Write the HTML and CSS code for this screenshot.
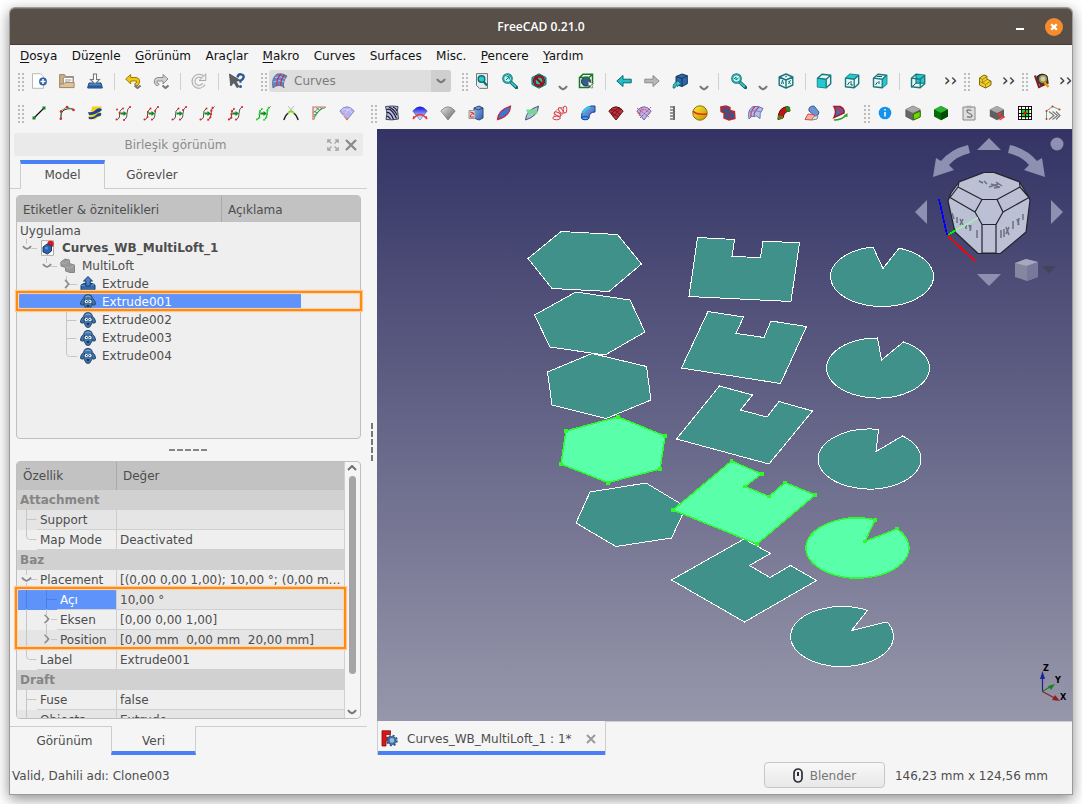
FILE: index.html
```html
<!DOCTYPE html>
<html lang="tr">
<head>
<meta charset="utf-8">
<title>FreeCAD 0.21.0</title>
<link rel="stylesheet" href="styles.css">
</head>
<body>
<svg class="defs" width="0" height="0">
  <defs>
    <linearGradient id="sky" x1="0" y1="0" x2="0" y2="1"><stop offset="0" stop-color="#333365"/><stop offset="1" stop-color="#9797ab"/></linearGradient>
    <linearGradient id="blueV" x1="0" y1="0" x2="1" y2="1"><stop offset="0" stop-color="#8fb4e8"/><stop offset="1" stop-color="#2f5fae"/></linearGradient>
    <linearGradient id="fanBlue" x1="0" y1="0" x2="0" y2="1"><stop offset="0" stop-color="#0a10e8"/><stop offset="1" stop-color="#ffffff"/></linearGradient>
    <linearGradient id="fanGray" x1="0" y1="0" x2="1" y2="1"><stop offset="0" stop-color="#e6e6e6"/><stop offset="1" stop-color="#606060"/></linearGradient>
    <linearGradient id="goldG" x1="0" y1="0" x2="1" y2="1"><stop offset="0" stop-color="#fff23a"/><stop offset="1" stop-color="#c08a00"/></linearGradient>
    <symbol id="chev" viewBox="0 0 10 6"><path d="M1 1q1 2 4 3.400Q8 3 9 1" fill="none" stroke="#7a7a7a" stroke-width="2"/></symbol>
    <symbol id="twist-open" viewBox="0 0 10 6"><path d="M1 1q1 1.800 4 3Q8 2.800 9 1" fill="none" stroke="#8c8c8c" stroke-width="1.800"/></symbol>
    <symbol id="twist" viewBox="0 0 6 10"><path d="M1 1q1 .5 3.600 4Q2 8.500 1 9" fill="none" stroke="#8c8c8c" stroke-width="1.800"/></symbol>
    <symbol id="pair" viewBox="0 0 16 16"><path d="M1 14.500Q5 14.500 4.500 10T7.500 3.500M8.500 15Q12 14 12 8.500T15.500 1.500" fill="none" stroke="#555" stroke-width="1"/><path d="M5.500 7.500h3V6l3.500 2.500-3.500 2.500V9.500h-3z" fill="#128a22"/></symbol>
    <symbol id="cube" viewBox="0 0 16 16"><path d="M1.500 5.200L6 1.200l8.700 1v8.600l-4.500 4L1.500 13.800z" fill="#e8f6f6" stroke="#1b777b" stroke-width="1.400" stroke-linejoin="round"/></symbol>
    <symbol id="cubewire" viewBox="0 0 16 16"><path d="M1.500 5.200l8.700 1 4.500-4M10.200 6.200v8.600" fill="none" stroke="#1b777b" stroke-width="1.300"/></symbol>
    <symbol id="dog" viewBox="0 0 16 16"><path d="M4.800 1.500Q8-.8 11.200 1.500l1.500 3Q15 6 15.700 10.200q-1.700 1.800-3.500.3-.5 1.500-1.300 2.500-.6 2.500-2.900 2.500T5.100 13q-.8-1-1.300-2.500-1.800 1.500-3.500-.3Q1 6 3.300 4.500z" fill="#3f74ad" stroke="#21405f" stroke-width=".9"/><path d="M4.500 5l-.7 5.500M11.500 5l.7 5.500" stroke="#1f3c5b" stroke-width=".8"/><path d="M5.500 3Q8 .8 10.500 3" stroke="#8fb6dc" fill="none"/><circle cx="6.300" cy="7.500" r="1.600" fill="#fff"/><circle cx="10" cy="7.500" r="1.600" fill="#fff"/><circle cx="6.600" cy="7.600" r=".6"/><circle cx="9.800" cy="7.600" r=".6"/><path d="M6.300 11.500q1.700-1 3.400 0l-1.700 2z" fill="#16283e"/></symbol>
    <symbol id="mag" viewBox="0 0 16 16"><path d="M7.500 8l7 6.500" stroke="#0d5d62" stroke-width="3.400" stroke-linecap="round"/><path d="M8 8.500l6 5.500" stroke="#2ec5c9" stroke-width="1.800"/><circle cx="5.500" cy="5.500" r="4.300" fill="#c9f2f2" stroke="#0d6d72" stroke-width="2"/><circle cx="5.500" cy="5.500" r="4.300" fill="none" stroke="#2ec5c9" stroke-width=".8"/></symbol>
    <symbol id="fan" viewBox="0 0 16 16"><path d="M.8 6Q8-2.500 15.200 6L8 15z"/></symbol>
  </defs>
</svg>

<main class="window">
  <header class="titlebar"><span class="title">FreeCAD 0.21.0</span><span class="minimize"></span>
    <span class="close"><svg width="18" height="18" viewBox="0 0 18 18"><circle cx="9" cy="9" r="9" fill="#f58b2d"/><path d="M6.200 6.200l5.600 5.600M11.800 6.200l-5.600 5.600" stroke="#fff" stroke-width="2.300"/></svg></span></header>

  <nav class="menubar">
    <span><u>D</u>osya</span><span>Düz<u>e</u>nle</span><span><u>G</u>örünüm</span><span>Araçlar</span><span><u>M</u>akro</span><span>Curves</span><span>Surfaces</span><span>Misc.</span><span><u>P</u>encere</span><span><u>Y</u>ardım</span>
  </nav>

  <div class="toolbar">
    <i class="grip first"></i>
    <span class="tool"><svg viewBox="0 0 16 16"><path d="M1.500.7h8l3 3v11.600h-11z" fill="#fff" stroke="#b9b9b9"/><circle cx="12" cy="8.500" r="3.900" fill="#2a62a6"/><path d="M9.500 8.500h5M12 6v5" stroke="#fff" stroke-width="1.500"/></svg></span>
    <span class="tool"><svg viewBox="0 0 16 16"><path d="M.6 14.500V1.500h5l1 2h7.900v11z" fill="#c9ad88" stroke="#a58b66"/><path d="M4.500 4.500h9.500v7H4.500z" fill="#fff" stroke="#999"/><path d="M6 7h6.500M6 9h5" stroke="#999"/><path d="M.6 14.600V11h4l1.500-1.500h9v5.100z" fill="#dcc29d" stroke="#a58b66"/></svg></span>
    <span class="tool"><svg viewBox="0 0 16 16"><path d="M2 10h12l1.300 5H.7z" fill="#4b86c8" stroke="#1e477c"/><path d="M.8 12.500h14.400V15H.8z" fill="#255a9b"/><path d="M6.500 1h3v5.500h3L8 11 3.500 6.500h3z" fill="#fff" stroke="#777" stroke-width="1.100"/></svg></span>
    <i class="sep"></i>
    <span class="tool"><svg viewBox="0 0 16 16"><path d="M.7 6L5.700 1.500V4.500H11q4 .5 3.500 4.500-.5 3-2.500 4l-2.500-2q2.500-.5 2-3H5.700v3z" fill="#f2c614" stroke="#a17a00"/><path d="M9.500 12.500l3 2.500 3-2.500" fill="none" stroke="#777" stroke-width="2"/></svg></span>
    <span class="tool"><svg viewBox="0 0 16 16"><path d="M15 6L10 1.500V4.500H5Q1 5 1.300 9q.4 3 3 4l2-2Q3.500 10.500 4 8h6v3z" fill="#d0d0d0" stroke="#8d8d8d"/><path d="M9.500 12.500l3 2.500 3-2.500" fill="none" stroke="#777" stroke-width="2"/></svg></span>
    <i class="sep"></i>
    <span class="tool"><svg viewBox="0 0 16 16"><path d="M12 4.500A5.500 5.500 0 1 0 12.800 11" fill="none" stroke="#aaa" stroke-width="4"/><path d="M12 4.500A5.500 5.500 0 1 0 12.800 11" fill="none" stroke="#eee" stroke-width="2"/><path d="M14.800.8v6.700H8z" fill="#eee" stroke="#aaa"/></svg></span>
    <i class="sep"></i>
    <span class="tool"><svg viewBox="0 0 16 16"><path d="M8.500 4.500q.5-3.500 3.500-3.200 3 .4 2.700 3-.3 1.800-3.200 3.500v2" fill="none" stroke="#2c5a94" stroke-width="2.300"/><circle cx="11.500" cy="13.500" r="1.500" fill="#2c5a94"/><path d="M.5 1l11 6.500-4.500.7 3 5.300-2 1.200-3-5.200L1.700 13z" fill="#5d6060" stroke="#44484a" stroke-width=".7"/></svg></span>
    <i class="grip wb"></i>
    <div class="combo">
      <svg class="combo-icon" viewBox="0 0 16 16"><path d="M1 15Q-1 5 5 1q6-1 10 2-5 6-3 12-2-3-5-2.500Q4 12 1 15z" fill="#5b86cf" stroke="#6b7590"/><path d="M1.500 9Q7 6.500 12 8.500M3 4.500q5-2 10 1" stroke="#a8c4f0" fill="none"/><path d="M5 13Q4 6 9 1M9 13Q8 7 12.500 2" fill="none" stroke="#cc3048" stroke-width="1.200"/></svg>
      <span>Curves</span><b><svg width="10" height="6"><use href="#chev"/></svg></b>
    </div>
    <i class="grip view"></i>
    <span class="tool"><svg viewBox="0 0 16 16"><path d="M2.500.6h11v14.800h-8l-3-3z" fill="#e8eeee" stroke="#777"/><circle cx="7.500" cy="6" r="3.300" fill="#2ec9cc" stroke="#087176" stroke-width="1.400"/><path d="M9.500 8.500l3.500 4" stroke="#087176" stroke-width="2.300"/></svg></span>
    <span class="tool"><svg viewBox="0 0 16 16"><use href="#mag"/><path d="M4 7l3-3M4.500 3.700h2.800v2.800" stroke="#087" fill="none"/></svg></span>
    <span class="tool shift"><svg viewBox="0 0 16 16"><path d="M1 4.500L8 .8l7 3.700v7L8 15.200 1 11.500z" fill="#27bcc1" stroke="#0b6a6e"/><circle cx="8" cy="8" r="4.800" fill="none" stroke="#660d0d" stroke-width="2.600"/><circle cx="8" cy="8" r="4.800" fill="none" stroke="#b51414" stroke-width="1.500"/><path d="M4.500 4.500l7 7" stroke="#8d1010" stroke-width="2"/></svg></span>
    <span class="drop"><svg width="10" height="6"><use href="#chev"/></svg></span>
    <span class="tool"><svg viewBox="0 0 16 16"><circle cx="8" cy="8.500" r="4.500" fill="#365d8d" stroke="#1a2f4d"/><path d="M1.500 4.500L5 1.300h9.500v9.500L11 14.500H1.500zM1.500 4.500H11l3.500-3.200M11 4.500v10" fill="none" stroke="#167a28" stroke-width="1.500"/><path d="M10 8.500l5.500 2-2 1 1.500 3-1.500.7-1.400-3-1.600 1.600z" fill="#fff" stroke="#555" stroke-width=".6"/></svg></span>
    <i class="sep"></i>
    <span class="tool"><svg viewBox="0 0 16 16"><path d="M.8 8L7 2.500v3.700h8.200v3.600H7v3.700z" fill="#20c0c6" stroke="#0a686c"/></svg></span>
    <span class="tool"><svg viewBox="0 0 16 16"><path d="M15.200 8L9 2.500v3.700H.8v3.600H9v3.700z" fill="#b8b8b8" stroke="#8a8a8a"/></svg></span>
    <span class="tool"><svg viewBox="0 0 16 16"><path d="M4 3.500L10 1l5.300 1.700v8L10 13.500l-6-2z" fill="#2f67a8" stroke="#16345c"/><path d="M4 3.500l6 2 5.300-2.800M10 5.500v8" fill="none" stroke="#16345c"/><path d="M1 15Q1 9.500 5 9V7l4 3.700-4 3v-2Q3 12 3 15z" fill="#35c4c9" stroke="#0a686c" stroke-width=".8"/></svg></span>
    <span class="drop"><svg width="10" height="6"><use href="#chev"/></svg></span>
    <i class="sep"></i>
    <span class="tool shift2"><svg viewBox="0 0 16 16"><use href="#mag"/><path d="M3 6l2-2v3l2.500-2" stroke="#087" fill="none"/></svg></span>
    <span class="drop"><svg width="10" height="6"><use href="#chev"/></svg></span>
    <span class="tool"><svg viewBox="0 0 16 16"><path d="M1.200 4L8 1l6.800 3v8L8 15.200 1.200 12zM1.200 4L8 7l6.800-3M8 7v8" fill="#e9f7f7" stroke="#1b777b" stroke-width="1.400" stroke-linejoin="round"/><path d="M3.500 11l1-4 1 4M10.500 8l2 3M12.500 7l-2 4M7 4l2-.8" stroke="#1b777b" fill="none"/></svg></span>
    <i class="sep"></i>
    <span class="tool"><svg viewBox="0 0 16 16"><use href="#cube"/><path d="M1.500 5.200l8.700 1v8.600l-8.700-1z" fill="#25c8ce"/><use href="#cubewire"/></svg></span>
    <span class="tool"><svg viewBox="0 0 16 16"><use href="#cube"/><path d="M1.500 5.200L6 1.200l8.700 1-4.500 4z" fill="#25c8ce"/><use href="#cubewire"/><path d="M3.500 12l2-3M7 8v4h2" stroke="#0e6266" fill="none"/></svg></span>
    <span class="tool"><svg viewBox="0 0 16 16"><use href="#cube"/><path d="M10.200 6.200l4.500-4v8.600l-4.500 4z" fill="#25c8ce"/><use href="#cubewire"/><path d="M3.500 12l2-3M7 8v3M5 3.500h5" stroke="#0e6266" fill="none"/></svg></span>
    <i class="sep"></i>
    <span class="tool"><svg viewBox="0 0 16 16"><use href="#cube"/><path d="M6 2h8v8H6z" fill="#25c8ce"/><use href="#cubewire"/><path d="M6 1.200v9h8M6 10.200l-4.500 4" stroke="#0e6266" fill="none"/></svg></span>
    <span class="more far">››</span>
    <i class="grip g3"></i>
    <span class="tool"><svg viewBox="0 0 16 16"><path d="M2.500 5L7 2l3 1.200v3L14 8v4l-5.500 3-6-3z" fill="#f2d02a" stroke="#80690a"/><path d="M2.500 5l3 1.400L10 3.500M5.500 6.400v3.400L10 6.500M5.500 9.800l3 1.500L14 8M8.500 11.300V15M2.500 8.500l3 1.300" fill="none" stroke="#907808" stroke-width=".8"/></svg></span>
    <span class="more">››</span>
    <i class="grip g4"></i>
    <span class="tool"><svg viewBox="0 0 16 16"><path d="M3 3.500Q8-1 13 3l1 6-7 3-4-3z" fill="#29425c" stroke="#162433"/><circle cx="9" cy="6" r="3.200" fill="#c6cbd0" stroke="#b29a20" stroke-width="1.500"/><path d="M1 2.500l4 11.500 9.500-4.500" fill="none" stroke="#8c1b1b" stroke-width="2.200"/><path d="M10.500 9.500l4 4.500" stroke="#d0a610" stroke-width="2.500"/></svg></span>
    <span class="more">››</span>
  </div>

  <div class="toolbar second">
    <i class="grip first"></i>
    <span class="tool"><svg viewBox="0 0 16 16"><path d="M3 13L13 3" stroke="#111" stroke-width="1.200"/><path d="M1.500 11.500h3v3h-3zM11.500 1.500h3v3h-3z" fill="#168420"/></svg></span>
    <span class="tool"><svg viewBox="0 0 16 16"><path d="M2 14Q1 5 8 4t7 1" fill="none" stroke="#333"/><path d="M2 14V6L8 1.800l6.500 3.400" fill="none" stroke="#4b9d55"/><g fill="#e52525"><circle cx="1.800" cy="13.800" r="1.300"/><circle cx="2" cy="6.500" r="1.300"/><circle cx="8" cy="2" r="1.300"/><circle cx="14.500" cy="5" r="1.300"/></g></svg></span>
    <span class="tool"><svg viewBox="0 0 16 16"><path d="M5 1.500h10l-2 4 1.500 4L8 14.500 1 13l3-6z" fill="#f6cf16"/><path d="M1 7q5 1 7.500-2T15 4l-1 2Q10 8 8 9T2 10zM1.500 12q5 1 7.500-2t5.500-1.500l-1 2.500q-3 0-5.500 2T2 14z" fill="#17439b"/></svg></span>
    <span class="tool"><svg viewBox="0 0 16 16"><use href="#pair"/><g class="red"><circle cx="1.500" cy="14.500" r="1"/><circle cx="2" cy="4.500" r="1"/><circle cx="4.500" cy="8" r="1"/><circle cx="8" cy="3.500" r="1"/><circle cx="9" cy="15" r="1"/><circle cx="15" cy="2" r="1"/></g></svg></span>
    <span class="tool"><svg viewBox="0 0 16 16"><use href="#pair"/><g class="red"><circle cx="1.500" cy="14.500" r="1"/><circle cx="4.500" cy="12" r="1"/><circle cx="4.800" cy="7" r="1"/><circle cx="7.500" cy="3.500" r="1"/><circle cx="9" cy="14.500" r="1"/><circle cx="12" cy="6" r="1"/><circle cx="15" cy="2" r="1"/></g></svg></span>
    <span class="tool"><svg viewBox="0 0 16 16"><use href="#pair"/><g class="red"><circle cx="1.500" cy="14.500" r="1"/><circle cx="7.500" cy="3.500" r="1"/><circle cx="9" cy="14.500" r="1"/><circle cx="12" cy="5" r="1"/><circle cx="15" cy="2" r="1"/></g></svg></span>
    <span class="tool"><svg viewBox="0 0 16 16"><use href="#pair"/><path class="dots" d="M8.500 15Q12 14 12 8.500T15.500 1.500"/><g class="red"><circle cx="1.500" cy="14.500" r="1"/><circle cx="7.500" cy="3.500" r="1"/></g></svg></span>
    <span class="tool"><svg viewBox="0 0 16 16"><use href="#pair"/><path class="dots" d="M1 14.500Q5 14.500 4.500 10T7.500 3.500"/><g class="red"><circle cx="9" cy="14.500" r="1"/><circle cx="15" cy="2" r="1"/></g></svg></span>
    <span class="tool"><svg viewBox="0 0 16 16"><use href="#pair"/><path class="dots lime" d="M1 14.500Q5 14.500 4.500 10T7.500 3.500M8.500 15Q12 14 12 8.500T15.500 1.500"/></svg></span>
    <span class="tool"><svg viewBox="0 0 16 16"><path d="M5 1l5 6M11 1L6 7" stroke="#bbb"/><path d="M4.500 9Q8 3.500 11.500 9" fill="none" stroke="#8ed321" stroke-width="2"/><path d="M.8 15q1.700-5 4-6.500M15.200 15q-1.700-5-4-6.500" fill="none" stroke="#222" stroke-width="1.400"/></svg></span>
    <span class="tool"><svg viewBox="0 0 16 16"><path d="M2.500 2.500H14Q7 5 5.500 13z" fill="#e3efe4"/><path d="M2.500 6l4 2M2.500 9.500l3 .5M5 2.500l4 3M9 2.500l2 1.500M2.500 12l9-9.500M2.500 8L8 2.500M14.500 2.500Q5 5 3 14.500" stroke="#2a7a36" stroke-width=".7" fill="none"/><path d="M2 15V2h13" fill="none" stroke="#d2705c" stroke-width="1.200"/></svg></span>
    <span class="tool"><svg viewBox="0 0 16 16"><use href="#fan" fill="#b3b3f4" stroke="#8d8dc8"/><path d="M3 5Q8 2 13 8M4 11Q8 5 12 3" fill="none" stroke="#e4d1f4"/><circle cx="8" cy="14" r="1.200" fill="#f37b35"/><circle cx="5" cy="9" r=".8" fill="#f37b35"/></svg></span>
    <i class="grip g5"></i>
    <span class="tool"><svg viewBox="0 0 16 16"><path d="M1.500 1.500Q8 .5 14 1.500l-.5 4 1 8.500Q8 15.500 2 14.500L3 8z" fill="#b9bddf" stroke="#1f2338" stroke-width=".8"/><path d="M2.500 4.500q5-2 10 9M2.500 7.500q4-1 7 7M2.500 11q2 0 4 3M5 2q5 2 8 8M9 2q3 1 4 4" fill="none" stroke="#161a2e" stroke-width="1.200"/></svg></span>
    <span class="tool"><svg viewBox="0 0 16 16"><use href="#fan" fill="url(#fanBlue)" stroke="#2730b0" stroke-width=".5"/><path d="M1 14Q8 5 15 14" fill="none" stroke="#e43131" stroke-width="1.300"/><path d="M1 14l1-3M15 14l-1-3" stroke="#e43131"/></svg></span>
    <span class="tool"><svg viewBox="0 0 16 16"><use href="#fan" fill="url(#fanGray)" stroke="#777" stroke-width=".7"/></svg></span>
    <span class="tool"><svg viewBox="0 0 16 16"><path d="M6 3l5-2 4 2v10l-4 2-5-2z" fill="url(#blueV)" stroke="#29477a"/><path d="M6 3l4 2 5-2" fill="none" stroke="#29477a"/><path d="M1 5.500h6v8H1z" fill="#ddd" stroke="#999"/><path d="M2 7q4 0 4 3M6 8q-4 1-4 4h4" fill="none" stroke="#d33"/></svg></span>
    <span class="tool"><svg viewBox="0 0 16 16"><path d="M1.500 14.500Q2 5 14.500 1.200 14 11 1.500 14.500z" fill="#3479d8" stroke="#c3283c" stroke-width="1.300"/></svg></span>
    <span class="tool"><svg viewBox="0 0 16 16"><path d="M1.500 15Q2 5 14.500 1.200 14 11 1.500 15z" fill="#a9c1df" stroke="#4a5668"/><path d="M2 4.500h10l2 4-10 1z" fill="#6edc8a" opacity=".9"/></svg></span>
    <span class="tool"><svg viewBox="0 0 16 16"><path d="M2 12Q2 3 12 2M8 14q0-5 7-7" fill="none" stroke="#999" stroke-width=".8"/><g fill="#f7eeee" fill-opacity=".7" stroke="#e04048"><ellipse cx="4.500" cy="13" rx="3.700" ry="1.800"/><ellipse cx="5.500" cy="9" rx="3.500" ry="1.600" transform="rotate(25 5.500 9)"/><ellipse cx="8.800" cy="5.500" rx="1.600" ry="3.300" transform="rotate(-35 8.800 5.500)"/><ellipse cx="13" cy="4.500" rx="1.800" ry="3.500"/></g></svg></span>
    <span class="tool"><svg viewBox="0 0 16 16"><path d="M1.500 13Q1 3 11 1h4v6q-6 0-6 6-4 2.500-7.500 0z" fill="url(#blueV)" stroke="#123fa0"/><path d="M3 8Q5 3 10 2" stroke="#28d0f2" stroke-width="2" fill="none"/><ellipse cx="5.200" cy="13.200" rx="3.500" ry="1.600" fill="#41a4ec" stroke="#123fa0"/></svg></span>
    <span class="tool"><svg viewBox="0 0 16 16"><use href="#fan" fill="#c13137" stroke="#5c1417"/><path d="M3 8l8 4M5 11.500L13 3.500M3 5q5-1 9 5M4 8q3-4 8-5" fill="none" stroke="#6b181c"/></svg></span>
    <span class="tool"><svg viewBox="0 0 16 16"><use href="#fan" fill="#b2b2ee" stroke="#6b6bb5"/><path d="M1 3l12 9M4 13L15 2M2 9Q8 0 14 9M6 2l-3 9" fill="none" stroke="#dc3b50" stroke-width=".9" stroke-dasharray="2 .8"/></svg></span>
    <span class="tool"><svg viewBox="0 0 16 16"><path d="M10 1v14" stroke="#666" stroke-width="2"/><path d="M6 2h5M6 5h5M6 8h5M6 11h5M6 14h5" stroke="#777" stroke-width="1.500"/></svg></span>
    <span class="tool"><svg viewBox="0 0 16 16"><circle cx="8" cy="8" r="7.200" fill="url(#goldG)" stroke="#8a7200"/><path d="M1 6q3 4 14 3" fill="none" stroke="#e22d16" stroke-width="1.600"/></svg></span>
    <span class="tool"><svg viewBox="0 0 16 16"><path d="M.8 2L6 1l4 1.500v3l4.500 1 .5 7-6 1.500-5-2V8L1 6.500z" fill="#32578d" stroke="#c3222e" stroke-width="1.300"/><path d="M1 3l4 1.500L10 3M4 8l5 1.500 5.500-2M9 9.500V15" fill="none" stroke="#c3222e"/></svg></span>
    <span class="tool"><svg viewBox="0 0 16 16"><path d="M1 14Q-1 5 5 1.500q6-1 10 2-4 5-3 10-4-4-6-2-3-1-5 2.500z" fill="#aebff0" stroke="#6378b8"/><path d="M3 12Q2 6 7 1.500M6 11Q6 6 11 2" fill="none" stroke="#d6304c" stroke-width="1.100"/><path d="M1 7q6-3 12 0" stroke="#6c86d0" fill="none"/></svg></span>
    <span class="tool"><svg viewBox="0 0 16 16"><path d="M2 14.500Q2 2 12 1.500L14 6q-6 0-7 7z" fill="#c31414" stroke="#5d0b0b"/><path d="M9.500 1.800Q12 1 14 1.800L14.500 6l-4 .8z" fill="#238c1c"/><path d="M1.500 14.500l.5-4 5 .5v3z" fill="#5a7d12"/></svg></span>
    <span class="tool"><svg viewBox="0 0 16 16"><path d="M5 6Q4 1 10 1l5 6q0 4-4 4z" fill="#6b93da" stroke="#3d5b94"/><path d="M1 14.500L4 9l7 1-3 5z" fill="#f2b2a8" stroke="#d84b3c"/><path d="M8 15q1-5 6-4l-1 3z" fill="#dde3ee" stroke="#888"/></svg></span>
    <span class="tool"><svg viewBox="0 0 16 16"><path d="M2 1.500h6Q13 4 12 8L2 12.500Q5 6 2 1.500z" fill="#5268a8" stroke="#a8182a" stroke-width="1.500"/><path d="M5 3q4 2 4 5" stroke="#cd2e44" stroke-width="1.500" fill="none"/><path d="M2 15q8 0 12-5" fill="none" stroke="#2b9f27" stroke-width="1.500"/><path d="M15.500 8v4l-4-1z" fill="#2b9f27"/></svg></span>
    <i class="grip g6"></i>
    <span class="tool"><svg viewBox="0 0 16 16"><circle cx="8" cy="8" r="6.300" fill="#1492ee"/><path d="M8 7v4.500M8 4v1.500" stroke="#fff" stroke-width="1.500"/></svg></span>
    <span class="tool"><svg viewBox="0 0 16 16"><path d="M.8 4.500L8 1l7.200 3.500v7L8 15.200.8 11.500z" fill="#666" stroke="#444" stroke-width=".6"/><path d="M.8 4.500L8 1l7.200 3.500L8 8z" fill="#aaa"/><path d="M8.500 9l6.700-2.800v5.800l-6.700 3z" fill="#6ed900" stroke="#347200"/></svg></span>
    <span class="tool"><svg viewBox="0 0 16 16"><path d="M1 4.500L8 1l7 3.500v7L8 15.200 1 11.500z" fill="#046b08"/><path d="M1 4.500L8 1l7 3.500L8 8z" fill="#2bb32f"/><path d="M8 8l7-3.500v7L8 15.200z" fill="#034d05"/></svg></span>
    <span class="tool"><svg viewBox="0 0 16 16"><path d="M2 2h12v13H2z" fill="#ddd" stroke="#888"/><path d="M5.500.7h5V3h-5z" fill="#aaa"/><path d="M10.500 5.500q-5-1.500-4.500 1 0 1 2.500 2t2.500 2.300q-.5 2.200-5 .9" fill="none" stroke="#777" stroke-width="1.300"/></svg></span>
    <span class="tool"><svg viewBox="0 0 16 16"><path d="M.8 4.500L8 1l7 3.500v7L8 15.200.8 11.500z" fill="#5f5f5f"/><path d="M.8 4.500L8 1l7 3.500L8 8z" fill="#aaa"/><path d="M8.500 9h3l-1.500 1.500 5 1.500-4.500 3" fill="none" stroke="#f03232" stroke-width="1.400"/></svg></span>
    <span class="tool"><svg viewBox="0 0 16 16"><path d="M1 1h14v14H1z" fill="#fff"/><path d="M4 4h8.500v8.500H4z" fill="#22d422"/><path d="M1 1.500h14M1 4.500h14M1 8.500h14M1 11.500h14M1 14.500h14M1.500 1v14M4.500 1v14M8.500 1v14M11.500 1v14M14.500 1v14" stroke="#000" stroke-width=".9"/><circle cx="8" cy="8" r="1.600" fill="#d21515"/></svg></span>
    <span class="tool"><svg viewBox="0 0 16 16"><path d="M1.500 14V6l6-4.500 7 3" fill="none" stroke="#66ab73"/><path d="M4 6.500l5 4-5 4M7.500 6.500l5 4-5 4M11 6.500l4 4-4 4" fill="none" stroke="#777" stroke-width="1.100"/><g fill="#e52525"><circle cx="1.500" cy="6" r="1"/><circle cx="7.500" cy="1.500" r="1"/><circle cx="14.500" cy="4.500" r="1"/><circle cx="1.500" cy="14" r="1"/></g></svg></span>
  </div>

  <div class="content">
    <aside class="dock">
      <div class="dock-title"><span>Birleşik görünüm</span>
        <svg width="12" height="12" viewBox="0 0 12 12" fill="none" stroke="#a3a3a3" stroke-width="1.200"><path d="M.8 4V.8H4M8 .8h3.200V4M.8 8v3.200H4M8 11.200h3.200V8M1 1l3.500 3.500M11 1L7.500 4.500M1 11l3.500-3.500M11 11L7.500 7.500"/></svg>
        <svg width="12" height="12" viewBox="0 0 12 12"><path d="M1 1l10 10M11 1L1 11" stroke="#8a8a8a" stroke-width="2.300"/></svg></div>
      <div class="tabs"><span class="tab active">Model</span><span class="tab">Görevler</span></div>

      <section class="tree">
        <div class="head"><span>Etiketler &amp; öznitelikleri</span><span>Açıklama</span></div>
        <svg class="branches" width="100" height="200" viewBox="17 222 100 200" fill="none"><path d="M26.500 238v5M31 247.500h6M46.500 257v5M51 265.500h6M66.500 275v5M69 283.500h8M66.500 288v64q0 3.500 3 3.500h7.500M66.500 301.500h10M66.500 319.500h10M66.500 337.500h10" stroke="#c6c6c6"/></svg>
        <div class="row root">Uygulama</div>
        <div class="row l1"><svg class="tw" width="10" height="6"><use href="#twist-open"/></svg><svg width="16" height="16" viewBox="0 0 16 16"><path d="M1.500.7h12v14.600h-12z" fill="#fff" stroke="#aaa"/><circle cx="10.500" cy="4" r="3.200" fill="#dd1717"/><path d="M3 7l4-3 4.500 2v5l-4 3L3 12z" fill="#2b64ad" stroke="#163a6b"/><circle cx="6.500" cy="8" r="1.500" fill="#5f92d4"/></svg><b>Curves_WB_MultiLoft_1</b></div>
        <div class="row l2"><svg class="tw" width="10" height="6"><use href="#twist-open"/></svg><svg width="16" height="16" viewBox="0 0 16 16"><path d="M.8 4L5 1l4.500 1v3.500l5 1.500v7.500L10 14.500 5.500 13V9.500L1 8z" fill="#999" stroke="#868686"/><path d="M1 4.500l4.500 1L9.500 2M5.500 9l4.500 1.200L14.500 7" fill="none" stroke="#b4b4b4" stroke-width=".8"/></svg><span>MultiLoft</span></div>
        <div class="row l3"><svg class="tw side" width="6" height="10"><use href="#twist"/></svg><svg width="16" height="16" viewBox="0 0 16 16"><path d="M1 9l3-1.500h8.500L15 9v4.500L12 15.400H1z" fill="#2f69ad" stroke="#163a6b"/><path d="M1 9.500h11l3-1.500" fill="none" stroke="#5a8fd0"/><path d="M8 .6L12.500 5h-2.300v5H5.800V5H3.500z" fill="#4a82c4" stroke="#163a6b"/></svg><span>Extrude</span></div>
        <div class="row l3 selected"><svg class="ico" width="16" height="16"><use href="#dog"/></svg><span>Extrude001</span></div>
        <div class="row l3"><svg class="ico" width="16" height="16"><use href="#dog"/></svg><span>Extrude002</span></div>
        <div class="row l3"><svg class="ico" width="16" height="16"><use href="#dog"/></svg><span>Extrude003</span></div>
        <div class="row l3"><svg class="ico" width="16" height="16"><use href="#dog"/></svg><span>Extrude004</span></div>
        <div class="mark mark-tree"></div>
      </section>

      <div class="split-h"></div>

      <div class="props-wrap">
      <section class="props">
        <div class="table">
          <div class="head"><span>Özellik</span><span>Değer</span></div>
          <div class="group">Attachment</div>
          <div class="prop alt"><span>Support</span><span></span></div>
          <div class="prop"><span>Map Mode</span><span>Deactivated</span></div>
          <div class="group">Baz</div>
          <div class="prop"><span>Placement</span><span>[(0,00 0,00 1,00); 10,00 °; (0,00 m…</span></div>
          <div class="prop sub alt current"><span>Açı</span><span>10,00 °</span></div>
          <div class="prop sub"><span>Eksen</span><span>[0,00 0,00 1,00]</span></div>
          <div class="prop sub alt"><span>Position</span><span>[0,00 mm&nbsp; 0,00 mm&nbsp; 20,00 mm]</span></div>
          <div class="prop"><span>Label</span><span>Extrude001</span></div>
          <div class="group">Draft</div>
          <div class="prop"><span>Fuse</span><span>false</span></div>
          <div class="prop alt"><span>Objects</span><span>Extrude</span></div>
        </div>
        <div class="scroll"><svg width="10" height="6" viewBox="0 0 10 6"><path d="M1 5l4-4 4 4" fill="none" stroke="#707070" stroke-width="2"/></svg><i></i><svg width="10" height="6"><use href="#chev"/></svg></div>
        <svg class="branches" width="100" height="230" viewBox="17 489 100 230" fill="none"><path d="M26.500 509v27q0 3.500 3 3.500h7M27 519.500h9.500M26.500 569v6M31 579.500h6M26.500 583v73q0 3.500 3 3.500h7M51 619.500h6M46.500 624v11M51 639.500h6M46.500 609v6M26.500 689v30M27 699.500h9.500" stroke="#c6c6c6"/><path d="M46.500 589v20M47 599.500h10M26.500 589v20" stroke="#4d7fe0"/><path d="M22 577.500q1 2 4.500 3.500 3.500-1.500 4.500-3.500M44.500 615q1.500.5 4 4-2.500 3.500-4 4M44.500 635q1.500.5 4 4-2.500 3.500-4 4" stroke="#8c8c8c" stroke-width="1.800"/></svg>
      </section>
      <div class="mark mark-props"></div>
      </div>

      <div class="tabs bottom"><span class="tab">Görünüm</span><span class="tab active">Veri</span></div>
    </aside>

    <div class="split-v"></div>

    <section class="work">
      <svg class="viewport" width="695" height="592" viewBox="377 129 695 592">
        <rect x="377" y="129" width="695" height="592" fill="url(#sky)"/>
        <g class="faces">
          <path d="M561 231.500L617.500 234.500 641.500 264 609 291.500 552 288.500 528 258.500z"/>
          <path d="M576 292L630 300 645 332 605 355 550 347 534.500 315z"/>
          <path d="M592 353.500L646.500 366.500 651 400 606 418.500 552 405 547.500 372z"/>
          <path d="M646 483L686 507 671.500 538 616 546.500 576 523 590 492z"/>
          <path d="M697.500 237.500L734.500 239.500 732 256.500 760.500 257.500 763 241.500 799.500 242.500 791 301.500 689 296.500z"/>
          <path d="M708 311.500L743.500 317 736 333.500 764 337.500 771 321 806.500 326.500 780.500 383.500 681.500 368z"/>
          <path d="M719.500 386L752.500 395 740.500 410 767 417 779 401.500 812.500 411 769 464 676.500 439z"/>
          <path d="M744 539L770.500 553.500 749.500 565.500 770 577.500 790.500 565.500 816.500 580.500 744.500 622 671.500 580z"/>
          <path d="M883 268.500L899 248.180A51.500 30 0 1 1 873 246.960z"/>
          <path d="M881.500 360L903.500 341.940A51.500 30 0 1 1 877.500 338z"/>
          <path d="M876 451.500L902.500 435.970A51.500 30 0 1 1 878.500 429.460z"/>
          <path d="M851.500 630.500L887 621.900A51.500 30 0 1 1 867.500 610.430z"/>
        </g>
        <g class="faces picked">
          <path d="M618 417L665 436 660 469 608 482.500 561 464 566 431z"/>
          <path d="M731.500 461L761.500 474 745 486.500 769 496.500 785 482.500 815 495 757 544 673 510z"/>
          <path d="M865 541.500L897 528.750A51.500 30 0 1 1 875 519.780z"/>
        </g>
        <path class="verts" d="M618 417h0M665 436h0M660 469h0M608 483h0M561 464h0M566 431h0M731.500 461h0M762 474h0M745 486.500h0M769 496.500h0M785 482.500h0M815 495h0M757 544h0M673 510h0M865 541.500h0M897 528.500h0M875 520h0"/>
        <g fill="#8e90b1">
          <circle cx="1057" cy="144" r="6.500"/>
          <path d="M989 138l12 12h-24zM915 212l12-12v24zM1063 212l-12-12v24zM989 286l12-12h-24z"/>
          <path id="turn" d="M968 145l2 8q-13 3-21 12l5 5-21 7 3-19 5 3q10-12 27-16z"/>
          <use href="#turn" transform="translate(1978 0) scale(-1 1)"/>
        </g>
        <g fill="#bbc0d4" stroke="#22252c" stroke-width="1.200" stroke-linejoin="round">
          <path d="M984 172.500h10l25.500 9.500 8.500 14 2 4-4 32-25.500 21.500h-22.500L955 232l-7-31 3-8 8-11z"/>
          <path d="M984 172.500h10L1019.500 182l.5 5-23 12.500h-15L958 187l1-5zM958 187l24 12.500-7 12.500-25-14.500zM1020 187l-23 12.500 6 12.500 26-14.500zM982 199.500h15l6 12.500-7 12.500h-14l-7-12.500zM982 224.500h14V253h-14z"/>
        </g>
        <g fill="none" stroke="#6c707e" stroke-width="1.500"><path d="M979 181l4 2M984 181l3 3M989 187l9-3M991 184l8 3M996 182l6 4M994 188l6-1"/><path d="M952 213l2 6M957 217v6M960 219l3 6M963 219l-3 6M966 224v5M969 225l2 5M971 225l-1 6M977 230v8"/><path d="M1001 230v8M1004 229v8M1006 227l3 8M1009 227l-3 7M1013 221v8M1017 219l2 6M1019 218l-1 7M1023 214v6"/></g>
        <g fill="none" stroke-width="1.800" class="crisp"><path d="M939 199l8 36" stroke="#0000ff"/><path d="M948 235l8-5" stroke="#00f000"/><path d="M956 230l22-12" stroke="#a6eab7"/><path d="M948 236l27 25" stroke="#ff0000"/></g>
        <path d="M1015 263l11-4 12 3v15l-11 4-12-4z" fill="#85869f"/><path d="M1015 263l11-4 12 3-11 4z" fill="#a7a7bd"/><path d="M1027 266l11-4v15l-11 4z" fill="#77789b"/><path d="M1042 266h14l-7 7.500z" fill="#44435c"/>
        <g fill="none" stroke-width="1.200"><path d="M1042.500 691.500V676" stroke="#22228c"/><path d="M1042.500 691.500l8-5" stroke="#208020"/><path d="M1042.500 691.500l12 6.500" stroke="#8c2020"/></g>
        <path d="M1042.500 671l2.500 8h-5z" fill="#22228c"/><path d="M1055 684l-7 2 3 4z" fill="#208020"/><path d="M1060 701l-5-6-3 5z" fill="#8c2020"/>
        <g class="axis"><text x="1043" y="671">Z</text><text x="1055" y="683">Y</text><text x="1060" y="700">X</text></g>
      </svg>
      <div class="docs"><span class="doc">
        <svg width="17" height="18" viewBox="0 0 17 18"><path d="M1 .8h8.500v3.700H5v2.800h3.500v3.700H5V16H1z" fill="#dc1515" stroke="#7d0d0d" stroke-width=".8"/><circle cx="11" cy="10.500" r="3.500" fill="#9bb8dc" stroke="#3c6aa5" stroke-width="2.200"/><circle cx="11" cy="10.500" r="5" fill="none" stroke="#294f82" stroke-width="1.500" stroke-dasharray="2 1.930"/></svg>
        <span>Curves_WB_MultiLoft_1 : 1*</span>
        <svg width="10" height="10" viewBox="0 0 10 10"><path d="M1 1l8 8M9 1L1 9" stroke="#999" stroke-width="1.900"/></svg></span></div>
    </section>
  </div>

  <footer class="status"><span>Valid, Dahili adı: Clone003</span>
    <button><svg width="10" height="15" viewBox="0 0 10 15" fill="none" stroke="#2c2f36"><rect x="1" y="1" width="8" height="13" rx="4" stroke-width="1.700"/><path d="M5 4v4" stroke-width="2"/></svg><span>Blender</span></button>
    <span>146,23 mm x 124,56 mm</span></footer>
</main>
</body>
</html>
```
FILE: styles.css
```css
* { box-sizing: border-box; }
body {
  margin: 0;
  width: 1082px;
  height: 804px;
  overflow: hidden;
  background: #fff;
  font: 12px/18px "DejaVu Sans", sans-serif;
  color: #4d4d4d;
}
.defs { display: block; height: 0; }
.window {
  width: 1062px;
  height: 786px;
  margin: 8px 0 0 10px;
  background: #f5f5f5;
  border-radius: 5px 5px 0 0;
  box-shadow: 0 0 0 1px #9a9a9a, 0 4px 14px 1px rgba(0, 0, 0, .45);
  display: flex;
  flex-direction: column;
}
.titlebar {
  height: 37px;
  flex: none;
  display: flex;
  align-items: center;
  background: #584f49;
  border-top: 1px solid #77706b;
  border-bottom: 1px solid #443d39;
  border-radius: 5px 5px 0 0;
  color: #fff;
}
.title { flex: 1; padding-left: 56px; text-align: center; font: 600 12.1px "Open Sans", sans-serif; }
.minimize { width: 8px; height: 2px; margin: 4px 21px 0 0; background: #fff; }
.close { display: flex; margin-right: 9px; }

.menubar { height: 21px; flex: none; display: flex; gap: 14.4px; padding: 2px 10px 0; color: #111; }
.menubar u { text-underline-offset: 2px; }

.toolbar { height: 30px; flex: none; display: flex; align-items: center; }
.toolbar.second { height: 33px; padding-top: 1px; }
.tool { width: 28px; flex: none; display: flex; justify-content: center; }
.tool svg { width: 16px; height: 16px; }
.shift { margin-left: 1px; }
.shift2 { margin-left: 2px; }
.sep { width: 10px; height: 17px; flex: none; background: linear-gradient(#d0d0d0, #d0d0d0) 5px 0 / 1px 100% no-repeat; }
.grip {
  width: 6px;
  height: 21px;
  flex: none;
  background: repeating-linear-gradient(#f5f5f5 0 2px, transparent 2px 4px), linear-gradient(90deg, #bcbcbc 2px, transparent 2px 4px, #bcbcbc 4px);
}
.first { margin: 0 1px 0 8px; }
.wb { margin: 0 2px 0 10px; }
.view { margin: 0 0 0 11px; }
.g3 { margin: 0 1px 0 4px; }
.g4 { margin: 0 0 0 4px; }
.g5 { margin: 0 1px 0 10px; }
.g6 { margin: 0 1px 0 10px; }
.drop { width: 19px; flex: none; display: flex; justify-content: center; padding-top: 14px; }
.more { width: 19px; flex: none; text-align: center; font-size: 17px; line-height: 16px; padding-bottom: 3px; color: #333; white-space: nowrap; }
.far { margin-left: 9px; }
.combo { width: 182px; height: 22px; flex: none; display: flex; align-items: center; background: #dedede; border-radius: 3px; color: #7b7b7b; overflow: hidden; }
.combo-icon { width: 16px; height: 16px; margin: 0 6px 0 3px; }
.combo b { width: 20px; height: 22px; margin-left: auto; display: flex; align-items: center; justify-content: center; background: #cfcfcf; }
.red { fill: #ec2020; }
.dots { fill: none; stroke: #ec2020; stroke-width: 2; stroke-dasharray: 1.7 1.5; }
.lime { stroke: #17ec27; }

.content { height: 626px; flex: none; display: flex; }
.dock { width: 357px; height: 626px; display: flex; flex-direction: column; }
.dock-title { width: 349px; height: 23px; margin: 4px 0 0 4px; padding-right: 6px; display: flex; align-items: center; gap: 6px; background: #eaeaea; border-radius: 2px; color: #8a8a8a; }
.dock-title span { flex: 1; padding-left: 16px; text-align: center; }

.tabs { height: 29px; flex: none; margin-top: 4px; display: flex; }
.tab { display: flex; align-items: center; justify-content: center; border-bottom: 1px solid #cecece; width: 94px; padding-top: 2px; }
.tabs::before { content: ""; width: 10px; border-bottom: 1px solid #cecece; }
.tabs::after { content: ""; flex: 1; border-bottom: 1px solid #cecece; }
.tab.active { width: 85px; border: 1px solid #cecece; border-top: 4px solid #4a80f5; border-bottom: 0; padding: 0 0 3px; }
.tabs.bottom { margin-top: 7px; }
.bottom::before { display: none; }
.bottom::after, .bottom .tab { border-bottom: 0; border-top: 1px solid #cecece; }
.bottom .tab { width: 101px; padding: 0 0 0 8px; }
.bottom .tab.active { width: 85px; padding: 4px 0 0; border-top: 0; border-bottom: 4px solid #4a80f5; }

.tree { position: relative; width: 345px; height: 244px; margin: 6px 0 0 6px; border: 1px solid #bfbfbf; border-radius: 4px; background: #efefef; }
.head { display: flex; height: 27px; background: #c2c2c2; border-radius: 3px 3px 0 0; }
.head span { padding: 5px 0 0 6px; }
.head span + span { border-left: 1px solid #a9a9a9; }
.tree .head { height: 26px; }
.tree .head span:first-child { width: 204px; }
.branches { position: absolute; left: 0; top: 27px; }
.row { position: relative; height: 18px; display: flex; align-items: center; gap: 6px; }
.root { height: 17px; padding-left: 3px; }
.l1 { padding-left: 5px; }
.l2 { padding-left: 25px; }
.l3 { padding-left: 47px; }
.l1 .tw, .l2 .tw { margin-right: 2px; }
.side { margin-right: 4px; }
.tw { flex: none; }
.ico { margin-left: 16px; }
.selected { color: #fff; width: 284px; background: linear-gradient(#5e93fb, #5e93fb) 2px 0 no-repeat; }
.mark { position: absolute; border: 2px solid #fd8d0a; box-shadow: 0 0 1px 1px #ffc79b, inset 0 0 1px 1px #ffd4b4; }
.mark-tree { left: -1px; top: 95px; width: 346px; height: 20px; }
.split-h { height: 22px; flex: none; background: repeating-linear-gradient(90deg, #858585 0 6px, transparent 6px 8px) 159px 10px / 38px 2px no-repeat; }
.props-wrap { position: relative; padding-left: 6px; }
.props { position: relative; width: 345px; height: 258px; border: 1px solid #bfbfbf; border-radius: 4px; overflow: hidden; display: flex; background: #f5f5f5; }
.table { width: 327px; flex: none; }
.props .head { height: 28px; border-radius: 0; }
.props .head span:first-child { width: 99px; }
.group { height: 20px; padding: 1px 3px; background: #d1d1d1; font-weight: bold; color: #858585; }
.prop { height: 20px; display: flex; background: #efefef; white-space: pre; }
.prop span { border-bottom: 1px solid #d0d0d0; padding-top: 1px; }
.prop span:first-child { width: 79px; margin-left: 20px; padding-left: 3px; }
.prop span + span { flex: 1; border-left: 1px solid #cecece; padding-left: 3px; }
.alt { background: #e5e5e5; }
.sub span:first-child { width: 59px; margin-left: 40px; }
.current { background: linear-gradient(90deg, #5e93fb 99px, #e5e5e5 99px); }
.current span:first-child { color: #fff; }
.scroll { flex: 1; border-left: 1px solid #d0d0d0; display: flex; flex-direction: column; align-items: center; padding: 3px 1px 0 0; }
.scroll i { width: 7px; height: 198px; margin: 5px 0 35px; border-radius: 4px; background: #a5a5a5; }
.mark-props { left: 5px; top: 126px; width: 331px; height: 62px; }

.split-v { width: 10px; background: repeating-linear-gradient(#777 0 6px, transparent 6px 8px) 4px 294px / 2px 38px no-repeat; }
.work { width: 695px; }
.viewport { display: block; }
.faces { fill: #41918b; stroke: #fff; stroke-width: 1; shape-rendering: crispEdges; }
.picked { fill: #5affa9; stroke: #30fa35; stroke-width: 1.5; }
.verts { stroke: #30fa25; stroke-width: 3.5; stroke-linecap: square; shape-rendering: crispEdges; }
.crisp { shape-rendering: crispEdges; }
.axis { font: bold 9px "DejaVu Sans Condensed", "DejaVu Sans", sans-serif; }
.docs { height: 34px; display: flex; }
.docs::after { content: ""; flex: 1; border-top: 1px solid #cecece; }
.doc { width: 229px; display: flex; align-items: center; padding: 1px 0 0 3px; border: solid #cecece; border-width: 0 1px; box-shadow: inset 0 -4px #4a80f5; }
.doc span { margin: 0 14px 0 9px; white-space: pre; }

.status { flex: 1; display: flex; align-items: center; padding: 1px 24px 0 2px; white-space: pre; }
.status span { padding-top: 2px; }
.status button { width: 121px; height: 26px; margin: 0 10px 0 auto; display: flex; align-items: center; justify-content: center; gap: 7px; border: 1px solid #c6c6c6; border-radius: 4px; background: linear-gradient(#f8f8f8, #e8e8e8); color: #777; font: inherit; }
```
